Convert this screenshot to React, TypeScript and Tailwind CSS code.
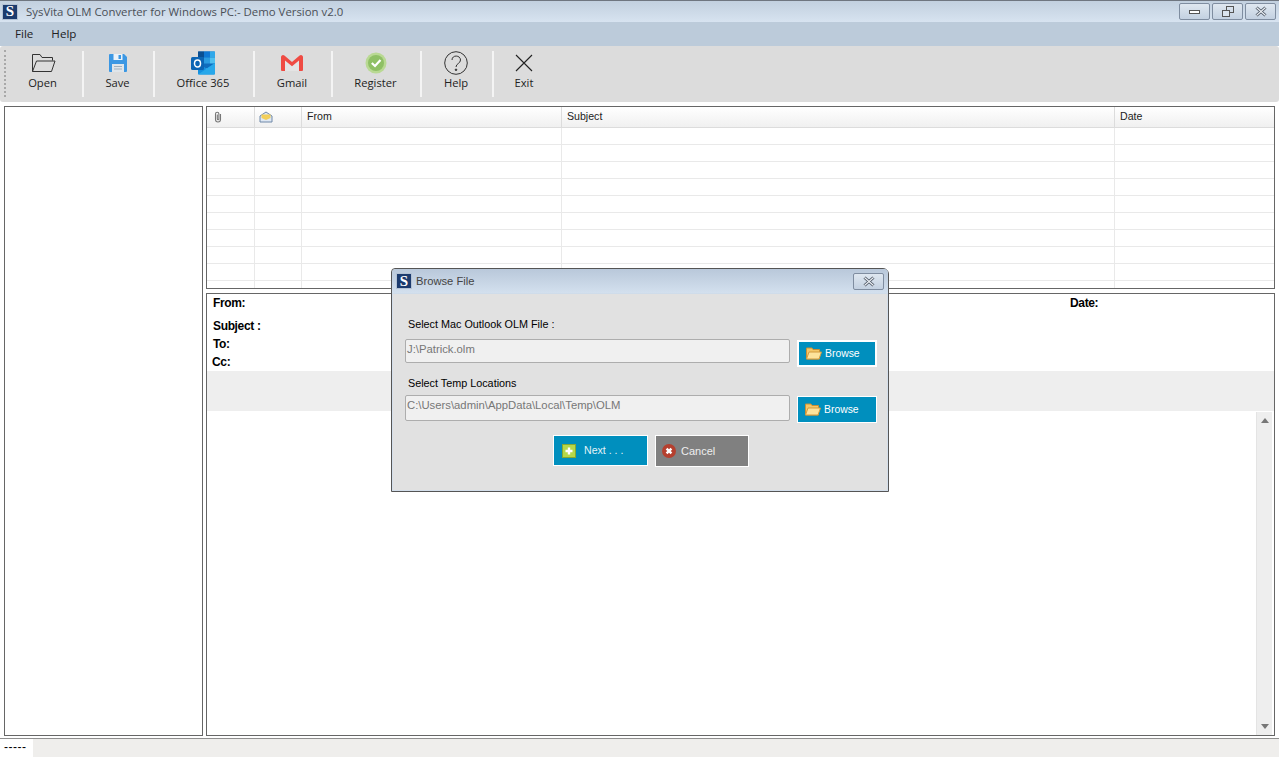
const TOOLS_FONT = "font-['Open_Sans','Noto_Sans',sans-serif]"

function LogoS({ className }: { className: string }) {
  return (
    <div className={`flex items-center justify-center bg-[#1c3b6e] border border-[#b4c2d4] text-white font-bold font-['Liberation_Serif',serif] ${className}`}>
      S
    </div>
  )
}

function WinBtn({ children, className = 'w-[31px]' }: { children: React.ReactNode; className?: string }) {
  return (
    <div className={`h-[17px] flex items-center justify-center rounded-[2px] border border-[#7f8da0] bg-gradient-to-b from-[#dfe7f0] to-[#c3d1e1] ${className}`}>
      {children}
    </div>
  )
}

function CloseGlyph() {
  return (
    <svg width="14" height="11" viewBox="0 0 14 11">
      <path d="M2.5 1.5 L11.5 9.5 M11.5 1.5 L2.5 9.5" stroke="#4b5563" strokeWidth="3" fill="none" />
      <path d="M2.5 1.5 L11.5 9.5 M11.5 1.5 L2.5 9.5" stroke="#eef2f6" strokeWidth="1.1" fill="none" />
    </svg>
  )
}

function OpenIcon() {
  return (
    <svg width="26" height="20" viewBox="0 0 26 20" fill="none" stroke="#333" strokeWidth="1">
      <path d="M2.5 18.5 V1.5 H10 L12 4.5 H22.5 V7.5" />
      <path d="M2.5 18.5 L6.5 8 H25 L21.5 18.5 Z" />
    </svg>
  )
}

function SaveIcon() {
  return (
    <svg width="20" height="20" viewBox="0 0 20 20">
      <path d="M1 2 a1 1 0 0 1 1-1 H16 L19 4 V18 a1 1 0 0 1-1 1 H2 a1 1 0 0 1-1-1 Z" fill="#3b97e3" />
      <rect x="5.5" y="1" width="9" height="6" fill="#eaf2f9" />
      <rect x="10.5" y="2" width="2.5" height="4" fill="#3b97e3" />
      <rect x="4" y="11" width="12" height="8" fill="#dfe5ea" />
      <path d="M6 13.5 H14 M6 16 H14" stroke="#9fb0be" strokeWidth="1" />
    </svg>
  )
}

function OutlookIcon() {
  return (
    <svg width="25" height="24" viewBox="0 0 25 24">
      <rect x="7" y="0.5" width="17" height="17" rx="1" fill="#0f6cbd" />
      <rect x="7" y="0.5" width="6" height="6" fill="#0a4f92" />
      <rect x="13" y="0.5" width="6" height="6" fill="#0f78d4" />
      <rect x="19" y="0.5" width="5" height="6" fill="#2fa8ea" />
      <rect x="13" y="6.5" width="6" height="6" fill="#2a9be0" />
      <rect x="19" y="6.5" width="5" height="6" fill="#4fc0f0" />
      <path d="M7 12 L15.5 17.5 L24 12 V22.5 a1 1 0 0 1-1 1 H8 a1 1 0 0 1-1-1 Z" fill="#1490df" />
      <path d="M7 23.5 L24 12 V22.5 a1 1 0 0 1-1 1 Z" fill="#28a8ea" />
      <rect x="0" y="6" width="13" height="13" rx="1.5" fill="#0c65b4" />
      <ellipse cx="6.5" cy="12.5" rx="3" ry="3.5" fill="none" stroke="#fff" strokeWidth="1.5" />
    </svg>
  )
}

function GmailIcon() {
  return (
    <svg width="24" height="18" viewBox="0 0 24 18">
      <path d="M3 3 L12 10 L21 3 V17 H3 Z" fill="#e4e4e4" />
      <path d="M1 16 V3 a2 2 0 0 1 3.4-1.4 L12 8 L19.6 1.6 A2 2 0 0 1 23 3 V16 a1 1 0 0 1-1 1 H19 V6.5 L12 12.3 L5 6.5 V17 H2 a1 1 0 0 1-1-1 Z" fill="#ef4b43" />
    </svg>
  )
}

function RegisterIcon() {
  return (
    <svg width="22" height="22" viewBox="0 0 22 22">
      <circle cx="11" cy="11" r="10.5" fill="#b9d993" />
      <circle cx="11" cy="11" r="8" fill="#8fc065" />
      <path d="M6.8 11 L10 14 L15.5 8" fill="none" stroke="#fff" strokeWidth="2.2" />
    </svg>
  )
}

function HelpIcon() {
  return (
    <svg width="24" height="24" viewBox="0 0 24 24" fill="none" stroke="#333" strokeWidth="1">
      <circle cx="12" cy="12" r="11.3" />
      <path d="M8 9 C8 3.5 16.5 4 16.5 9 C16.5 12.5 12 12.5 12 16" />
      <circle cx="12" cy="18.8" r="0.8" fill="#333" />
    </svg>
  )
}

function ExitIcon() {
  return (
    <svg width="18" height="18" viewBox="0 0 18 18" stroke="#222" strokeWidth="1.1">
      <path d="M1 1 L17 17 M17 1 L1 17" />
    </svg>
  )
}

function FolderIcon() {
  return (
    <svg width="16" height="13" viewBox="0 0 16 13">
      <path d="M0.5 12 V1 H6 L7 2.5 H13.5 V12 Z" fill="#f4c768" stroke="#c98f35" />
      <path d="M0.5 12 L3 5 H15.5 L13 12 Z" fill="#fde39c" stroke="#d39b3f" />
    </svg>
  )
}

const TOOLBAR = [
  { label: 'Open', icon: <OpenIcon />, width: 'w-[79px]', sep: true },
  { label: 'Save', icon: <SaveIcon />, width: 'w-[71px]', sep: true },
  { label: 'Office 365', icon: <OutlookIcon />, width: 'w-[100px]', sep: true },
  { label: 'Gmail', icon: <GmailIcon />, width: 'w-[78px]', sep: true },
  { label: 'Register', icon: <RegisterIcon />, width: 'w-[89px]', sep: true },
  { label: 'Help', icon: <HelpIcon />, width: 'w-[72px]', sep: true },
  { label: 'Exit', icon: <ExitIcon />, width: 'w-[62px]', sep: false },
]

const COLS = 'grid grid-cols-[48px_47px_260px_553px_1fr]'

function GridRow() {
  return (
    <div className={`${COLS} h-[17px] border-b border-[#e9e9e9]`}>
      <div className="border-r border-[#e9e9e9]" />
      <div className="border-r border-[#e9e9e9]" />
      <div className="border-r border-[#e9e9e9]" />
      <div className="border-r border-[#e9e9e9]" />
      <div />
    </div>
  )
}

function HeaderCell({ children, last = false }: { children?: React.ReactNode; last?: boolean }) {
  return (
    <div className={`flex items-center pl-[5px] ${last ? '' : 'border-r border-[#dcdcdc]'}`}>{children}</div>
  )
}

function Field({ value, className }: { value: string; className: string }) {
  return (
    <div className={`w-[385px] rounded-[2px] border border-[#adadad] bg-[#f0f0f0] pl-[1px] text-[11.3px] text-[#777] ${className}`}>
      {value}
    </div>
  )
}

function BrowseBtn({ thick = false }: { thick?: boolean }) {
  return (
    <div className={`w-[80px] h-[27px] mt-[1px] flex items-center pl-[7px] gap-[3px] bg-[#008fbe] text-white text-[10.4px] border-white ${thick ? 'border-2' : 'border'}`}>
      <FolderIcon />
      <span>Browse</span>
    </div>
  )
}

function BrowseDialog() {
  return (
    <div className="absolute left-[391px] top-[268px] w-[498px] h-[224px] rounded-tl-[4px] rounded-tr-[6px] border border-[#555] bg-[#e1e1e1] font-['Liberation_Sans',sans-serif]">
      <div className="h-[25px] flex items-center pl-[4px] border-b border-[#cfdcea] bg-gradient-to-b from-[#b9c8da] to-[#d3e0ee] rounded-t-[4px]">
        <LogoS className="w-[16px] h-[16px] text-[15px]" />
        <span className="ml-[4px] text-[11.2px] text-[#444]">Browse File</span>
        <div className="ml-auto mr-[4px]">
          <WinBtn><CloseGlyph /></WinBtn>
        </div>
      </div>
      <div className="pl-[12px] pr-[10px] border-x border-b border-[#d3deea] h-[197px]">
        <div className="pt-[23px] pl-[3px] text-[10.8px] leading-[14px] text-black">Select Mac Outlook OLM File :</div>
        <div className="mt-[8px] flex justify-between items-start">
          <Field value="J:\Patrick.olm" className="h-[24px] leading-[18px]" />
          <BrowseBtn thick />
        </div>
        <div className="mt-[9px] pl-[3px] text-[10.8px] leading-[14px] text-black">Select Temp Locations</div>
        <div className="mt-[5px] flex justify-between items-start">
          <Field value="C:\Users\admin\AppData\Local\Temp\OLM" className="h-[26px] leading-[18px]" />
          <BrowseBtn />
        </div>
        <div className="mt-[12px] pl-[148px] flex gap-[7px]">
          <div className="w-[95px] h-[31px] flex items-center pl-[8px] bg-[#008fbe] border border-white text-[10.6px] text-[#e4f3f8]">
            <svg width="14" height="14" viewBox="0 0 14 14">
              <rect x="0.5" y="0.5" width="13" height="13" fill="#b6d84a" stroke="#86a832" />
              <path d="M7 3.5 V10.5 M3.5 7 H10.5" stroke="#fff" strokeWidth="2.4" />
            </svg>
            <span className="ml-[8px]">Next . . .</span>
          </div>
          <div className="w-[94px] h-[32px] flex items-center pl-[6px] bg-[#808080] border border-white text-[11px] text-[#eee]">
            <svg width="14" height="14" viewBox="0 0 14 14">
              <circle cx="7" cy="7" r="7" fill="#b5402f" />
              <path d="M4.6 4.6 L9.4 9.4 M9.4 4.6 L4.6 9.4" stroke="#fff" strokeWidth="2.4" />
            </svg>
            <span className="ml-[5px]">Cancel</span>
          </div>
        </div>
      </div>
    </div>
  )
}

export default function App() {
  return (
    <div className="relative w-[1279px] h-[757px] overflow-hidden bg-white flex flex-col">
      {/* title bar */}
      <div className="h-[22px] flex items-center border-t border-[#6f7680] bg-gradient-to-b from-[#c2d0df] to-[#d7e3f0] pl-[2px] pr-[3px]">
        <LogoS className="w-[16px] h-[16px] text-[15px]" />
        <span className={`ml-[8px] text-[11.4px] text-[#4a4f57] ${TOOLS_FONT}`}>SysVita OLM Converter for Windows PC:- Demo Version v2.0</span>
        <div className="ml-auto flex gap-[2px]">
          <WinBtn>
            <div className="w-[11px] h-[4px] border border-[#555] bg-white" />
          </WinBtn>
          <WinBtn>
            <svg width="12" height="11" viewBox="0 0 12 11" fill="none" stroke="#555">
              <rect x="4.5" y="0.5" width="7" height="6" />
              <rect x="0.5" y="4.5" width="7" height="6" fill="#dbe4ee" />
            </svg>
          </WinBtn>
          <WinBtn><CloseGlyph /></WinBtn>
        </div>
      </div>

      {/* menu */}
      <div className={`h-[24px] flex items-center bg-[#bccbda] pl-[15px] gap-[18px] text-[11.6px] text-[#222] ${TOOLS_FONT}`}>
        <span>File</span>
        <span>Help</span>
      </div>

      {/* toolbar */}
      <div className={`relative h-[56px] flex items-stretch bg-[#dcdcdc] rounded-[3px] pl-[5px] text-[11.2px] text-[#222] ${TOOLS_FONT}`}>
        <div className="absolute left-[4px] top-[4px] bottom-[5px] border-l-2 border-dotted border-[#a8a8a8]" />
        {TOOLBAR.map((t) => (
          <div key={t.label} className={`${t.width} my-[5px] flex flex-col items-center pr-[2px] ${t.sep ? 'border-r-2 border-[#f4f4f4]' : ''}`}>
            <div className="h-[24px] flex items-center justify-center">{t.icon}</div>
            <span className="leading-[16px]">{t.label}</span>
          </div>
        ))}
      </div>

      {/* panels */}
      <div className="flex-1 flex gap-[3px] pl-[4px] pr-[4px] pt-[4px] pb-[2px]">
        <div className="w-[199px] border-[1.5px] border-[#666] bg-white" />
        <div className="flex-1 flex flex-col gap-[4px]">
          <div className="h-[183px] overflow-hidden border-[1.5px] border-[#666] bg-white">
            <div className={`${COLS} h-[21px] border-b border-[#dcdcdc] bg-gradient-to-b from-white to-[#f0f0f0] text-[10.6px] text-[#222] font-['Liberation_Sans',sans-serif]`}>
              <HeaderCell>
                <svg width="10" height="12" viewBox="0 0 10 12" fill="none" stroke="#777" strokeWidth="1.1" className="ml-[1px]">
                  <path d="M7.5 3 V8.5 a2.5 2.5 0 0 1-5 0 V3 a1.7 1.7 0 0 1 3.4 0 V8 a.8 .8 0 0 1-1.6 0 V3.5" />
                </svg>
              </HeaderCell>
              <HeaderCell>
                <svg width="14" height="12" viewBox="0 0 14 12" className="ml-[-1px]">
                  <path d="M1 5 L7 1 L13 5 V11 H1 Z" fill="#dfe8f3" stroke="#6f88a8" />
                  <path d="M2.5 3.5 H11.5 V7 L7 9 L2.5 7 Z" fill="#f3cf5a" />
                </svg>
              </HeaderCell>
              <HeaderCell>From</HeaderCell>
              <HeaderCell>Subject</HeaderCell>
              <HeaderCell last>Date</HeaderCell>
            </div>
            {Array.from({ length: 10 }).map((_, i) => (
              <GridRow key={i} />
            ))}
          </div>

          <div className="flex-1 relative flex flex-col border-[1.5px] border-[#666] bg-white font-['Liberation_Sans',sans-serif]">
            <div className="h-[77px] relative text-[12px] font-bold tracking-[-0.35px] text-black">
              <div className="pl-[6px] pt-[2px] leading-[14px]">From:</div>
              <div className="pl-[6px] pt-[9px] leading-[14px]">Subject :</div>
              <div className="pl-[6px] pt-[4px] leading-[14px]">To:</div>
              <div className="pl-[5px] pt-[4px] leading-[14px]">Cc:</div>
              <div className="absolute left-[863px] top-[2px] leading-[14px]">Date:</div>
            </div>
            <div className="h-[40px] bg-[#eeeeee]" />
            <div className="flex-1 flex justify-end">
              <div className="w-[16px] mr-[2px] mt-[1px] flex flex-col justify-between items-center bg-[#eeeeee] border-l border-[#e4e4e4] py-[6px]">
                <div className="w-0 h-0 border-x-[4px] border-x-transparent border-b-[5px] border-b-[#777]" />
                <div className="w-0 h-0 border-x-[4px] border-x-transparent border-t-[5px] border-t-[#777]" />
              </div>
            </div>
          </div>
        </div>
      </div>

      {/* status bar */}
      <div className="h-[19px] border-t-[1.5px] border-[#8f8f8f] flex bg-[#efeeec]">
        <div className="w-[33px] bg-white pl-[4px] text-[12px] leading-[17px] tracking-[0.5px] text-black font-['Liberation_Sans',sans-serif]">-----</div>
      </div>

      <BrowseDialog />
    </div>
  )
}
